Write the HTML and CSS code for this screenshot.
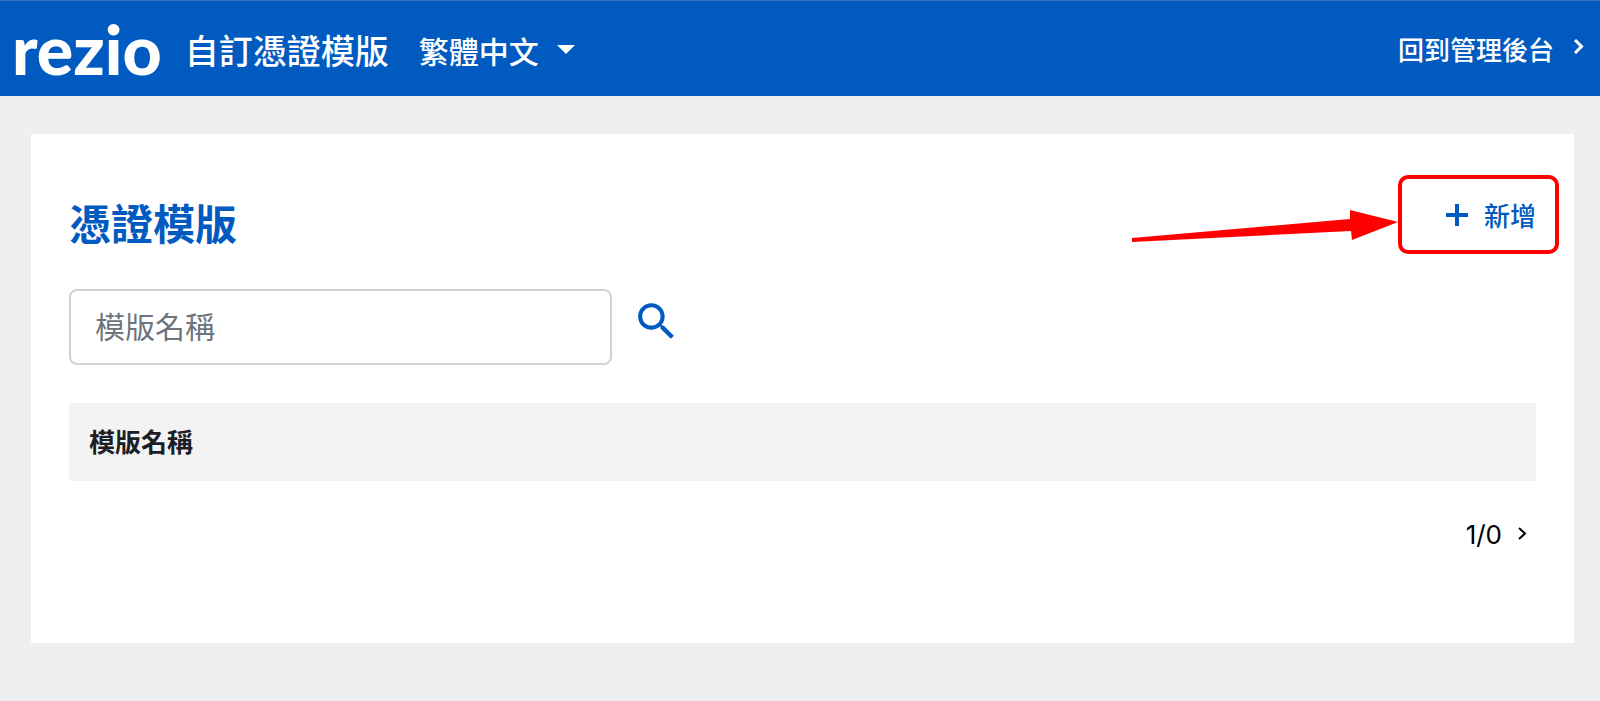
FILE: index.html
```html
<!DOCTYPE html>
<html lang="zh-Hant">
<head>
<meta charset="utf-8">
<meta name="viewport" content="width=device-width, initial-scale=1">
<title>自訂憑證模版</title>
<link rel="stylesheet" href="styles.css">
</head>
<body>
<header class="topbar">
  <div class="logo">rezio</div>
  <div class="topbar-title">自訂憑證模版</div>
  <label class="language">
    <select class="language-select" aria-label="語言">
      <option>繁體中文</option>
    </select>
    <svg class="caret" viewBox="0 0 18 11" aria-hidden="true"><path d="M0 2h18l-9 9z"/></svg>
  </label>
  <a class="back-link" href="#">
    <span>回到管理後台</span>
    <svg class="chevron" viewBox="0 0 10 20" aria-hidden="true"><path d="M1 1 7.500 7.500 1 14"/></svg>
  </a>
</header>

<main class="panel">
  <div class="panel-head">
    <h1 class="panel-title">憑證模版</h1>
    <div class="add-area">
      <button class="add-button" type="button">
        <svg class="plus" viewBox="0 0 22 26" aria-hidden="true"><path d="M11 0v22M0 11h22"/></svg>
        <span>新增</span>
      </button>
      <div class="highlight"></div>
      <svg class="arrow" viewBox="0 0 266 32" aria-hidden="true"><path d="M0 28 218 9 218 0 266 12 220 30 219 21 0 32z"/></svg>
    </div>
  </div>

  <form class="search">
    <input class="search-input" type="text" placeholder="模版名稱" aria-label="模版名稱">
    <button class="search-button" type="button" aria-label="搜尋">
      <svg class="search-icon" viewBox="0 0 24 24" aria-hidden="true"><path d="M15.500 14h-.79l-.28-.27C15.410 12.590 16 11.110 16 9.500 16 5.910 13.090 3 9.500 3S3 5.910 3 9.500 5.910 16 9.500 16c1.610 0 3.090-.59 4.230-1.570l.27.28v.79l5 4.990L20.490 19l-4.990-5zm-6 0C7.010 14 5 11.990 5 9.500S7.010 5 9.500 5 14 7.010 14 9.500 11.990 14 9.500 14z"/></svg>
    </button>
  </form>

  <table class="templates">
    <thead>
      <tr><th scope="col">模版名稱</th></tr>
    </thead>
  </table>

  <nav class="pager" aria-label="分頁">
    <span>1/0</span>
    <button class="pager-next" type="button" aria-label="下一頁">
      <svg class="chevron chevron-small" viewBox="0 0 10 18" aria-hidden="true"><path d="M1 2 7 7.500 1 13"/></svg>
    </button>
  </nav>
</main>
</body>
</html>
```

FILE: styles.css
```css
* {
  box-sizing: border-box;
}

body {
  margin: 0;
  background: #efeff1;
  color: #1b2026;
  font-family: Inter, "Noto Sans CJK TC", sans-serif;
  font-size: 26px;
}

button,
input,
select {
  font: inherit;
  color: inherit;
}

button {
  padding: 0;
  border: 0;
  background: none;
  cursor: pointer;
}

.topbar {
  display: flex;
  align-items: center;
  height: 96px;
  padding: 0 16px 0 12px;
  border-top: 1px solid #3d74b8;
  background: #005abf;
  color: #fff;
  font-weight: 500;
}

.logo {
  font-family: Lato, sans-serif;
  font-size: 68px;
  font-weight: 900;
  line-height: 84px;
}

.topbar-title {
  margin-left: 23px;
  padding-top: 6px;
  font-size: 34px;
  line-height: 48px;
}

.language {
  display: flex;
  align-items: center;
  gap: 18px;
  margin-left: 30px;
}

.language-select {
  appearance: none;
  padding: 6px 0 0;
  border: 0;
  background: none;
  font-size: 30px;
}

.language-select option {
  color: #1b2026;
}

.caret {
  width: 18px;
  height: 11px;
  fill: #fff;
}

.back-link {
  display: flex;
  align-items: center;
  gap: 20px;
  margin-left: auto;
  color: #fff;
  text-decoration: none;
}

.chevron {
  width: 10px;
  height: 20px;
  fill: none;
  stroke: currentColor;
  stroke-width: 3;
}

.chevron-small {
  height: 18px;
  stroke-width: 2;
}

.panel {
  margin: 38px 26px 38px 31px;
  padding: 38px 38px 88px;
  background: #fff;
}

.panel-head {
  display: flex;
  justify-content: space-between;
  align-items: flex-start;
}

.panel-title {
  margin: 0;
  color: #005abf;
  font-size: 42px;
  font-weight: 700;
  line-height: 106px;
}

.add-area {
  position: relative;
}

.add-button {
  display: flex;
  align-items: center;
  gap: 16px;
  color: #005abf;
  font-weight: 500;
  line-height: 90px;
}

.plus {
  width: 22px;
  height: 26px;
  fill: none;
  stroke: currentColor;
  stroke-width: 4;
}

.highlight {
  position: absolute;
  top: 3px;
  right: -23px;
  width: 161px;
  height: 79px;
  border: 4px solid #f00;
  border-radius: 10px;
  pointer-events: none;
}

.arrow {
  position: absolute;
  top: 38px;
  right: 138px;
  width: 266px;
  height: 32px;
  fill: #f00;
  pointer-events: none;
}

.search {
  display: flex;
  align-items: flex-start;
  gap: 20px;
  margin-top: 11px;
}

.search-input {
  width: 37%;
  height: 76px;
  padding: 0 24px;
  border: 2px solid #ced4da;
  border-radius: 8px;
  background: #fff;
  font-size: 30px;
}

.search-input::placeholder {
  color: #6c757d;
  opacity: 1;
}

.search-button {
  margin-top: 8px;
}

.search-icon {
  display: block;
  width: 49px;
  height: 49px;
  fill: #005abf;
}

.templates {
  width: 100%;
  margin-top: 38px;
  border-collapse: collapse;
}

.templates th {
  padding: 20px 20px 18px;
  background: #f3f3f3;
  font-weight: 700;
  line-height: 40px;
  text-align: left;
}

.pager {
  display: flex;
  justify-content: flex-end;
  align-items: center;
  gap: 16px;
  margin-top: 34px;
  padding-right: 8px;
  color: #000;
  line-height: 40px;
}

.pager-next {
  display: flex;
}
```
